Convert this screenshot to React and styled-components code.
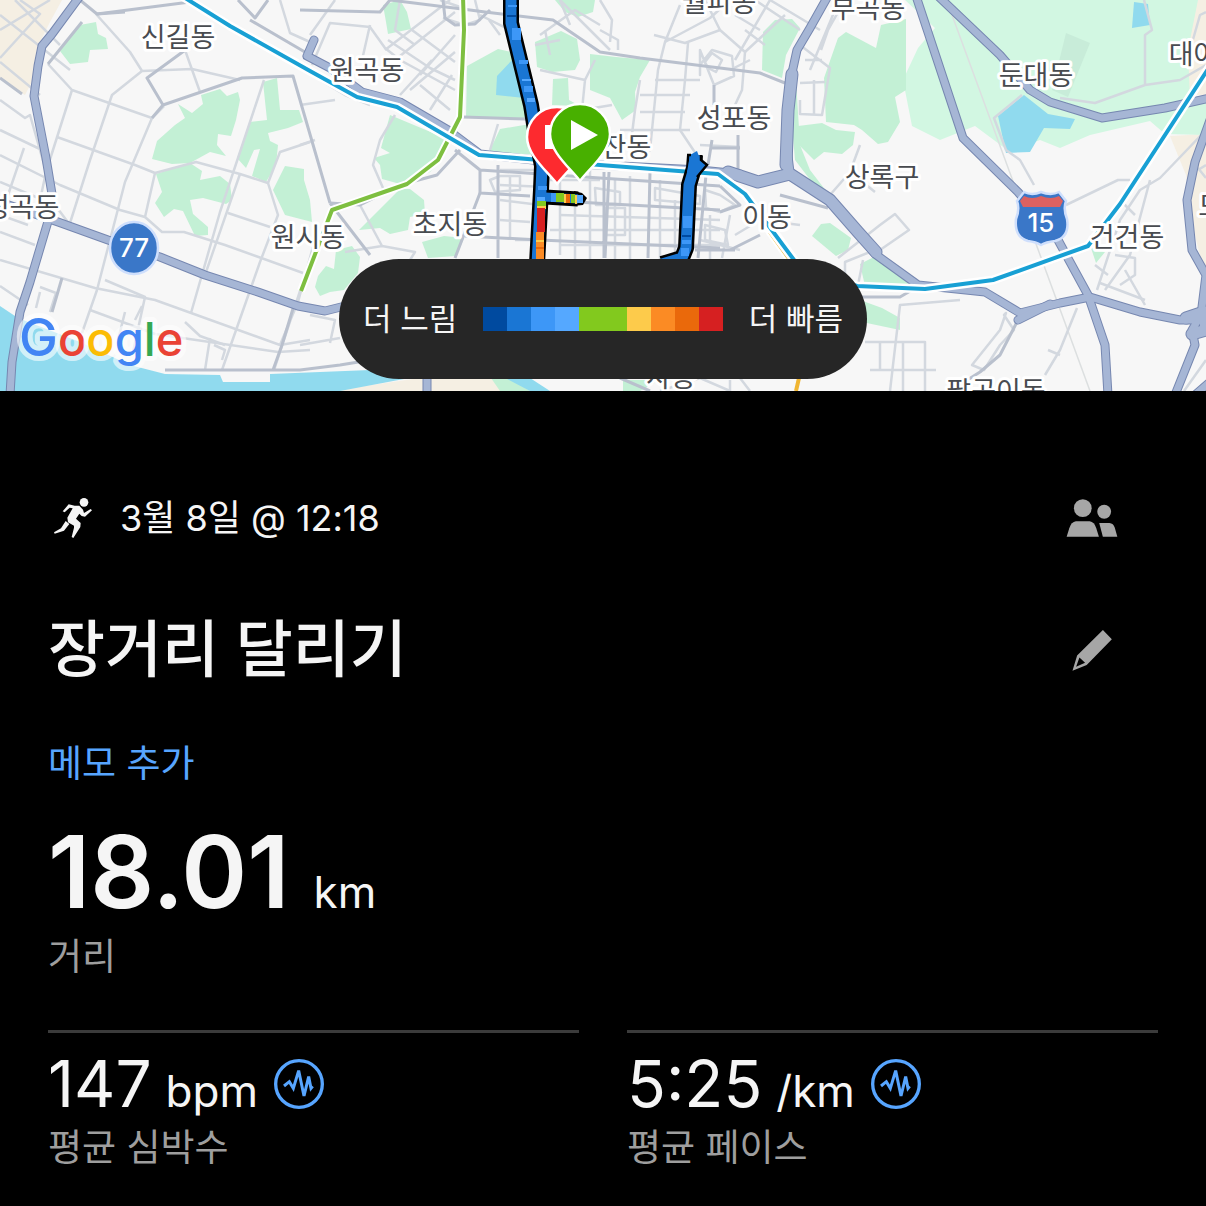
import React from "react";
import styled, { createGlobalStyle } from "styled-components";

const GlobalStyle = createGlobalStyle`
  body {
    margin: 0;
    background-color: #000;
    color: #f5f5f5;
    font-family: Inter, "Noto Sans CJK KR", sans-serif;
  }
`;

const MapSection = styled.section`
  position: relative;
  height: 391px;
  overflow: hidden;
  background-color: #f7f7f7;
`;

const MapCanvas = styled.svg`
  display: block;
  width: 100%;
  height: 100%;

  .halo {
    fill: #484b50;
    stroke: #fff;
    stroke-width: 6px;
    stroke-linejoin: round;
    paint-order: stroke;
    font: 400 27px "Noto Sans CJK KR", sans-serif;
    text-anchor: middle;
  }

  .shield {
    fill: #fff;
    font: 500 26px Inter, sans-serif;
    text-anchor: middle;
  }

  .logo {
    font: 500 47px Inter, sans-serif;
    stroke: #fff;
    stroke-opacity: 0.6;
    stroke-width: 10px;
    stroke-linejoin: round;
    paint-order: stroke;
  }

  .logo .initial {
    font-size: 52px;
  }
`;

const Legend = styled.div`
  position: absolute;
  right: 0;
  bottom: 12px;
  left: 0;
  display: flex;
  align-items: center;
  justify-content: space-between;
  width: 528px;
  height: 120px;
  margin: 0 auto;
  padding: 0 24px;
  box-sizing: border-box;
  border-radius: 60px;
  background-color: #262626;
  font-size: 31px;
  line-height: 48px;
  white-space: nowrap;
`;

const Scale = styled.div`
  display: flex;
`;

const Swatch = styled.span`
  width: 24px;
  height: 24px;
  background-color: ${(props) => props.$color};
`;

const Content = styled.main`
  padding: 61px 48px 32px;
`;

const Row = styled.div`
  display: flex;
  align-items: center;
  justify-content: space-between;
`;

const Meta = styled.div`
  display: flex;
  align-items: center;
  column-gap: 22px;
  font-size: 36px;
  line-height: 48px;

  svg {
    width: 50px;
    height: 42px;
  }
`;

const Title = styled.h1`
  margin: 0;
  font-size: 62px;
  font-weight: 500;
  line-height: 80px;
`;

const IconButton = styled.button`
  display: flex;
  align-items: center;
  justify-content: center;
  width: ${(props) => props.$size}px;
  height: ${(props) => props.$size}px;
  padding: 0;
  border: 0;
  background: none;
  color: ${(props) => props.$color || "#a6a6a6"};
  cursor: pointer;
`;

const MemoButton = styled.button`
  display: block;
  margin: 24px 0;
  padding: 0;
  border: 0;
  background: none;
  color: #57a5ff;
  font-family: inherit;
  font-size: 37px;
  line-height: 48px;
  cursor: pointer;
`;

const Value = styled.div`
  display: flex;
  align-items: baseline;
  column-gap: ${(props) => (props.$large ? 24 : 14)}px;
  font-size: ${(props) => (props.$large ? 100 : 64)}px;
  font-weight: ${(props) => (props.$large ? 600 : 400)};
  line-height: ${(props) => (props.$large ? 120 : 80)}px;
`;

const Unit = styled.span`
  font-size: 44px;
  font-weight: 400;
  line-height: 48px;
`;

const Label = styled.div`
  color: #9e9e9e;
  font-size: 37px;
  line-height: 50px;
`;

const Stats = styled.div`
  display: grid;
  grid-template-columns: 1fr 1fr;
  column-gap: 48px;
  margin-top: 48px;
`;

const Stat = styled.div`
  border-top: 3px solid #3b3b3b;
  padding-top: 12px;
`;

const StatHead = styled.div`
  display: flex;
  align-items: center;
  column-gap: 16px;
  height: 78px;
`;

const scaleColors = [
  "#004a9f", "#1a76d4", "#3d97f7", "#55a8ff", "#82c91e",
  "#82c91e", "#fdcb4b", "#fb8b24", "#ea690b", "#d62021"
];

const sand = [
  "M0 0H62L50 22L40 42L38 70L25 95L0 78Z",
  "M1198 0H1206V95H1186L1190 20Z",
  "M1170 136L1206 134V280L1195 235L1186 175Z",
  "M330 391L420 378H500L520 391Z"
];

const park = [
  "M905 0H1198L1188 50L1190 100L1206 95V135L1165 134L1150 121L1090 135L1060 148L1040 140L1010 152L975 126L940 140L912 126L903 80L918 48L935 28Z"
];

const greens = [
  "M60 51L80 25L96 22L98 34L106 38L108 49L90 50L88 62L70 64Z",
  "M152 159L157 141L175 125L185 118L178 104L192 113L203 104L201 95L220 89L227 96L238 92L240 100L236 120L231 136L218 134L217 145L226 156L210 152L190 163L172 164Z",
  "M237 158L250 122L267 120L263 82L277 78L280 110L299 110L303 122L288 128L268 133L270 141L278 145L276 165L266 182L252 176L260 149L254 150L246 168Z",
  "M156 174L190 163L202 171L200 180L220 176L230 184L232 200L226 204L203 198L190 200L193 214L208 227L208 235L195 236L183 211L174 209L164 217L155 203L162 192Z",
  "M273 190L285 166L304 169V180L310 200L312 222L285 215Z",
  "M383 5L400 0L407 12L411 29L388 34L386 22Z",
  "M390 115L445 138L442 158L430 172L400 184L382 179L380 165L374 158L390 153L381 148Z",
  "M359 230L400 189L410 189L424 200L425 214L410 217L408 230L390 234L380 228Z",
  "M318 276L326 266L334 269L336 250L352 246L360 257L358 273L344 290L330 292L320 296L315 287Z",
  "M422 242L444 236L464 238L456 256L428 258Z",
  "M467 66L498 49L525 55L535 117L520 119L466 117Z",
  "M490 150L500 129L530 124L535 155L490 152Z",
  "M535 42L561 31L577 39L580 60L575 70L552 72L537 67Z",
  "M553 79L568 78L569 100L580 106L552 105Z",
  "M590 54L616 57L650 60L640 77L635 92L636 110L622 120L610 98L590 90Z",
  "M555 0H595L593 12L578 17L565 12Z",
  "M763 32L775 20L792 19L800 28L786 55L782 78L762 70Z",
  "M824 78L838 38L846 32L876 48L881 25L906 19V90L895 97L900 122L888 142L878 144L862 130L854 125L826 122Z",
  "M798 126L822 123L836 130L855 132L853 145L842 154L824 152L814 160L798 144Z",
  "M788 80L796 80L800 145L810 170L830 196L818 190L795 160Z",
  "M812 236L821 224L830 223L851 238L848 250L836 256Z",
  "M860 264L874 257L905 277L910 286H865Z",
  "M860 300L882 308L900 318V330L862 322Z",
  "M623 380H660L640 391H623Z",
  "M491 378H510L530 391H500Z",
  "M1091 248L1105 252L1096 263Z"
];

const waters = [
  "M0 306L18 318L80 342L130 365L165 374L220 375L223 382H270V374L345 371L420 368V376L340 391H0Z",
  "M497 76L514 58L524 98L496 95Z",
  "M998 116L1024 95L1048 114L1075 119L1070 129L1044 128L1030 152L1006 153Z",
  "M1134 2L1148 4L1150 25L1132 28Z",
  "M505 378H530L550 391H530Z"
];

const minorRoads = [
  "M0 58L40 14L20 0M0 15L70 70M0 30L50 0M15 0L60 45M0 62L40 95",
  "M48 64L72 90L152 118L164 106M72 90L46 172L38 210M57 137L135 165L155 173",
  "M96 14L130 52L142 71L192 69L240 80M142 71L112 95L90 160L70 223",
  "M185 50L200 92M152 118L125 182L97 290M97 290L82 333M155 173L145 217L162 232H184L225 245L303 273",
  "M0 100L25 118L30 115L47 175M0 130L42 150M0 155L60 185L120 210L145 217M24 148L8 195",
  "M0 182L55 205L70 225M0 215L28 225M0 232L35 245M0 260L95 288L155 300L280 345L310 340",
  "M0 286L28 305M40 287L56 293L50 312M40 292L36 308M90 310L155 334L278 352L310 350",
  "M105 280L145 297L133 352M125 312L118 340M142 306L135 320M185 322L200 336L225 345",
  "M264 80L220 212L191 313M155 173L196 162L240 174L268 183L280 152L310 142M240 174L205 275M228 213L270 227",
  "M268 183L278 215L260 262L222 370M314 243L298 302L280 345M274 370L302 285",
  "M210 338L205 370M214 345L225 350L222 360",
  "M280 0L290 33L310 42M310 35L335 0M312 65L330 23L370 27L385 48L400 60L455 90",
  "M320 80L345 95L370 105M335 100L300 105M300 145L315 140",
  "M370 25L362 60M400 0L395 30L415 45M385 50L450 0M412 30L455 62M395 60L455 12M420 75L455 35M410 90L455 52",
  "M388 40L430 68L455 80M400 95L432 60M430 110L452 75M420 85L450 110",
  "M463 8L440 0M443 18L465 25L480 20L475 0M480 15L520 35",
  "M395 115L380 140L373 165L383 188M360 205L382 246L415 252L410 260M382 246L345 252",
  "M489 20L500 35M540 35L575 10L600 25M545 30L550 55M560 0L570 25",
  "M490 150L498 124M535 45L560 40M560 0L585 25L610 50M600 0L612 20L610 42",
  "M585 80L582 110L612 105M540 70L585 80L595 60M600 30L618 40V50",
  "M654 35L685 43L720 30L745 52L742 90L735 105M680 5L665 42L658 70L650 150L642 160",
  "M665 42L710 18L730 0M688 43L685 80L680 130L700 160M640 80L635 110L630 150",
  "M700 50L714 85L734 76L732 56L712 50L700 65V75ZM705 62L712 53L722 60L716 72L708 68Z",
  "M640 95H690M640 112H685M655 80H700M620 130H690M700 145L740 147",
  "M735 60L770 0M720 30L705 0M745 52L785 15M755 0L800 30M770 0L820 30M745 30L765 45M730 70L750 60M735 15L760 30",
  "M800 45L830 68L822 115L800 114V100M800 83L825 82M805 60H822M814 80V115",
  "M821 50L828 30L845 0M810 70L835 10",
  "M500 170H545M500 185L545 187M510 175V240M500 220L530 222M515 240H535M500 200L540 205",
  "M490 180L500 176H520V190L495 192Z",
  "M550 180H600M560 170V255M575 205V260M590 170V260M615 180V260M630 176V260M660 180V260M675 200V260",
  "M560 215L720 220M550 230H720M560 245H720M595 188L620 192V205H596Z",
  "M605 208H625V235H606Z M655 188L700 196V204L655 200Z",
  "M705 190L720 195L735 205L720 212L706 208ZM705 225L725 230L728 245L705 240Z",
  "M700 240L740 250M710 215V260M730 215L722 258M735 235L760 220L800 225",
  "M838 258L880 225L895 214L909 230L880 250L872 256",
  "M830 195L850 172L860 145M850 172L875 192M857 290L863 260M870 252L845 262V280",
  "M960 300L900 305L890 391M865 342H925V391M870 370H936M880 342V370M903 342V391",
  "M1006 313L1000 330L980 355L972 365L984 370L1000 345L1014 330L1004 315Z",
  "M1077 308L1060 350L1045 375M1048 350L1060 355",
  "M1006 150L1020 160L1034 185M1006 150L994 118L1022 95M1066 205L1118 180H1130",
  "M1206 130L1160 178L1140 190L1120 220L1097 290M1150 180L1130 255L1105 290",
  "M1120 200L1135 215M1115 225L1140 235M1125 270L1145 305M1115 255L1135 258V275L1120 285",
  "M1095 265L1108 275M1100 283L1145 300M1184 391L1206 360",
  "M1144 0L1152 30L1145 35V85L1180 80L1206 65M1145 85L1095 103L1060 98M1190 50L1200 15L1206 12",
  "M1206 165L1198 170M1198 168L1206 178",
  "M310 315L335 320L330 343M300 345L340 338",
  "M660 391L700 378L730 391M690 378L680 391M730 391V380M740 378L750 391"
];

const middleRoads = [
  "M0 78L22 94M80 0L97 14L190 2M238 0L255 18L268 0M48 64L82 22",
  "M188 48L147 78L163 105L242 78L293 76L330 203M163 105L152 118",
  "M97 14L125 12M300 10L380 12L390 0L470 10L485 12L553 20L600 52L640 58L760 73L785 83",
  "M250 20L310 55M330 203L360 205L380 195M330 203L370 255M460 150L437 175L400 185",
  "M443 0L445 18L455 25L475 24L490 10M463 117L525 119L580 122",
  "M455 150L480 170V193L530 196M480 170L540 174L600 178L720 186",
  "M480 193L465 232L455 258M498 165V258M540 200L720 210M465 236L540 240L720 248M604 172V258M609 172L605 258",
  "M650 172L648 258M706 175L698 258M712 140L708 165M738 135V170M712 148H740",
  "M62 278L52 312M295 302L282 345L273 370M165 370H300L340 365L420 352",
  "M720 186L740 205L720 212M730 250L760 235M695 250H735",
  "M714 85V105M780 195L828 208M857 297H900L912 290",
  "M1018 320L1000 355L980 372L950 391M650 391L620 378"
];

const highways = [
  "M80 -4L52 34L42 46L38 66L34 96L46 158L52 194L49 218L30 282L20 312L12 362L10 395",
  "M0 202L58 222L108 240L160 257L205 275L258 292L298 306L325 311L345 306",
  "M314 40L307 56L330 68L362 92L400 102L448 130L480 154L560 163L700 170L740 174",
  "M828 -4L810 28L797 50L790 82L786 140L790 172",
  "M858 232L875 254L918 285L985 292L1020 313L1060 303L1090 297L1140 312L1180 320L1210 320",
  "M916 -4L963 138L1018 192L1058 240L1088 295L1105 345L1108 395",
  "M938 -4L1000 55L1030 90L1050 102L1102 118L1165 108L1210 98",
  "M1210 120L1195 162L1187 200L1192 250L1206 275L1201 315L1192 330L1195 345L1175 395",
  "M1018 320L1050 304M427 378V395M1195 395L1210 382"
];

// interchanges, where several carriageways run side by side
const wideHighways = [
  "M792 74L788 110L786 165",
  "M728 172L758 182L790 174L830 200L858 232L876 252",
  "M1186 318L1204 312L1206 330L1192 334"
];

const lines = {
  green: "M463 -4L464 30L460 117L438 160L407 184L332 210L301 291",
  blue: "M182 -4L230 26L310 71L357 97L397 107L479 155L540 160L600 165L718 174L745 194L800 268L857 286L925 289L993 280L1088 246L1120 204L1210 66"
};

const routes = {
  main: "M511 -4V23L531 105L535 130L542 166L541 190L537 264",
  branch: "M545 197L578 199",
  right: "M695 155L694 168L689 185L686 248L682 258L662 264"
};

const routeTicks = [
  [508, 5, 9, 2, "#3d97f7"], [507, 15, 9, 2, "#004a9f"], [512, 28, 9, 12, "#3d97f7"],
  [519, 60, 9, 4, "#3d97f7"], [522, 79, 9, 2, "#55a8ff"], [524, 86, 9, 6, "#3d97f7"],
  [527, 98, 8, 4, "#55a8ff"], [538, 186, 9, 4, "#3d97f7"], [537, 197, 8, 4, "#55a8ff"],
  [537, 201, 9, 5, "#82c91e"], [537, 206, 9, 3, "#fdcb4b"], [537, 208, 8, 24, "#d62021"],
  [536, 232, 8, 28, "#fb8b24"], [536, 240, 8, 2, "#fdcb4b"], [536, 247, 8, 2, "#ea690b"],
  [551, 193, 5, 9, "#3d97f7"], [556, 193, 8, 9, "#82c91e"], [564, 194, 2, 9, "#fdcb4b"],
  [566, 194, 4, 9, "#ea690b"], [571, 194, 4, 9, "#82c91e"], [575, 195, 2, 9, "#fdcb4b"],
  [577, 195, 6, 8, "#55a8ff"], [683, 216, 9, 12, "#3d97f7"], [682, 235, 9, 2, "#004a9f"],
  [682, 240, 9, 4, "#3d97f7"], [681, 248, 8, 8, "#3d97f7"]
];

const places = [
  ["신길동", 178, 47], ["원곡동", 367, 80], ["월피동", 719, 12], ["부곡동", 868, 18],
  ["둔대동", 1036, 85], ["대야동", 1206, 64], ["성포동", 734, 128], ["고잔동", 614, 157],
  ["상록구", 882, 187], ["이동", 767, 227], ["건건동", 1127, 247], ["도마교동", 1248, 216],
  ["초지동", 450, 234], ["원시동", 308, 247], ["성곡동", 22, 217], ["사동", 671, 387],
  ["팔곡이동", 996, 401]
];

const Paths = ({ items, ...rest }) => (
  <g {...rest}>
    {items.map((d) => (
      <path key={d} d={d} />
    ))}
  </g>
);

const Pin = ({ x, y, color, children }) => (
  <g transform={`translate(${x} ${y})`}>
    <path
      d="M0 0C-10 -13 -30 -29 -30 -47A30 30 0 0 1 30 -47C30 -29 10 -13 0 0Z"
      fill={color}
      stroke="#fff"
      strokeWidth="2.5"
    />
    {children}
  </g>
);

const RouteMap = () => (
  <MapCanvas viewBox="0 0 1206 391" preserveAspectRatio="xMidYMid slice" role="img" aria-label="경로 지도">
    <rect width="1206" height="391" fill="#f7f7f7" />
    <Paths items={sand} fill="#f5efe3" />
    <Paths items={park} fill="#d2f7e2" />
    <path d="M1066 33L1090 43L1068 97L1052 90Z" fill="#c8ecd9" />
    <Paths items={greens} fill="#c3f0d5" />
    <Paths items={waters} fill="#90daee" />
    <path d="M952 15L1090 391" fill="none" stroke="#dcdfe0" strokeWidth="1.5" />
    <g fill="none" strokeLinejoin="round">
      <Paths items={minorRoads} stroke="#d3d8df" strokeWidth="2.5" />
      <Paths items={middleRoads} stroke="#b9c0cd" strokeWidth="3" />
      <g strokeLinecap="round">
        <Paths items={highways} stroke="#7687b0" strokeWidth="9" />
        <Paths items={wideHighways} stroke="#7687b0" strokeWidth="13" />
        <Paths items={highways} stroke="#a6b6d5" strokeWidth="7" />
        <Paths items={wideHighways} stroke="#a6b6d5" strokeWidth="11" />
      </g>
      <path d="M768 226L795 264" stroke="#fff" strokeWidth="12" />
      <path d="M770 232L793 264M799 378L796 391" stroke="#f0b531" strokeWidth="4" />
      <path d={lines.green} stroke="#fff" strokeWidth="8" />
      <path d={lines.green} stroke="#7ebf40" strokeWidth="4" />
      <path d={lines.blue} stroke="#fff" strokeWidth="9" />
      <path d={lines.blue} stroke="#18a0d4" strokeWidth="4" />
    </g>
    {places.map(([name, x, y]) => (
      <text key={name} className="halo" x={x} y={y}>{name}</text>
    ))}
    <g fill="none" strokeLinejoin="round">
      <path d={routes.main} stroke="#000" strokeWidth="16" />
      <path d={routes.branch} stroke="#000" strokeWidth="15" />
      <path d="M574 191L582 193L587 198L583 205L572 206Z" fill="#000" />
      <path d={routes.right} stroke="#000" strokeWidth="16" />
      <path d={routes.main} stroke="#1a76d4" strokeWidth="11" />
      <path d={routes.branch} stroke="#1a76d4" strokeWidth="9" />
      <path d={routes.right} stroke="#1a76d4" strokeWidth="11" />
    </g>
    <path d="M690 155L697 151L700 159L707 165L697 176L687 172Z" fill="#1a76d4" />
    <path d="M687 155H691M701 155V160L707 165L697 177" fill="none" stroke="#000" strokeWidth="2.5" />
    {routeTicks.map(([x, y, width, height, fill]) => (
      <rect key={`${x}-${y}`} x={x} y={y} width={width} height={height} fill={fill} />
    ))}
    <Pin x={557} y={184} color="#fd2a2f">
      <path d="M-12 -59H12V-35H-12Z" fill="#fff" />
    </Pin>
    <Pin x={580} y={181} color="#48b000">
      <path d="M-9 -61L18 -46L-9 -31Z" fill="#fff" />
    </Pin>
    <ellipse cx="134" cy="248" rx="24" ry="26" fill="#3a77c8" stroke="#cfdffc" strokeWidth="2.5" />
    <text className="shield" x="134" y="257">77</text>
    <path
      d="M1024 192Q1032 196 1041 192Q1051 196 1059 192L1066 201Q1063 209 1067 219Q1070 237 1055 241Q1046 242 1041 245Q1036 242 1028 241Q1014 237 1016 219Q1020 209 1017 201Z"
      fill="#3a77c8"
      stroke="#cfdffc"
      strokeWidth="2.5"
    />
    <path d="M1024 196Q1032 200 1041 196Q1051 200 1059 196L1063 201L1060 207H1023L1020 201Z" fill="#dc6161" />
    <text className="shield" x="1041" y="232">15</text>
    <text className="logo" x="19" y="356">
      <tspan className="initial" fill="#4285f4">G</tspan>
      <tspan fill="#ea4335">o</tspan>
      <tspan fill="#fbbc05">o</tspan>
      <tspan fill="#4285f4">g</tspan>
      <tspan fill="#34a853">l</tspan>
      <tspan fill="#ea4335">e</tspan>
    </text>
  </MapCanvas>
);

const RunIcon = () => (
  <svg viewBox="54 78 150 126" fill="#f5f5f5" aria-hidden="true">
    <circle cx="162" cy="94" r="13" />
    <path d="M116 100L134 104L148 104L159 116L162 126L182 114L186 118L165 137L155 135L148 128L138 143L152 156L151 168L130 201L125 198L132 170V164L114 154L112 140L128 112L119 110L104 124L98 121Z" />
    <path d="M107 150L118 159L102 179L74 188L72 184L93 172Z" />
  </svg>
);

const PeopleIcon = () => (
  <svg width="52" height="40" viewBox="78 54 158 120" fill="currentColor" aria-hidden="true">
    <circle cx="129" cy="84" r="27" />
    <circle cx="194" cy="95" r="21" />
    <path d="M80 171L88 145Q94 126 108 124H150Q164 126 170 145L178 171Z" />
    <path d="M179 129H210Q222 130 226 143L234 171H190Z" />
  </svg>
);

const PencilIcon = () => (
  <svg width="42" height="43" viewBox="92 444 126 130" fill="currentColor" aria-hidden="true">
    <path fillRule="evenodd" d="M188 447L215 475L139 553L96 570L110 524ZM117 530L107 558L134 546Z" />
  </svg>
);

const PulseIcon = () => (
  <svg width="50" height="50" viewBox="738 59 150 150" fill="none" stroke="currentColor" aria-hidden="true">
    <circle cx="813" cy="134" r="70" strokeWidth="10" />
    <path d="M768 140L784 127L796 147L812 94L828 170L842 112L849 147L854 141" strokeWidth="9" />
  </svg>
);

const stats = [
  { value: "147", unit: "bpm", label: "평균 심박수" },
  { value: "5:25", unit: "/km", label: "평균 페이스" }
];

const App = () => {
  return (
    <>
      <GlobalStyle />
      <MapSection>
        <RouteMap />
        <Legend>
          <span>더 느림</span>
          <Scale>
            {scaleColors.map((color, index) => (
              <Swatch key={index} $color={color} />
            ))}
          </Scale>
          <span>더 빠름</span>
        </Legend>
      </MapSection>
      <Content>
        <Row>
          <Meta>
            <RunIcon />
            <span>3월 8일 @ 12:18</span>
          </Meta>
          <IconButton $size={132} aria-label="공개 범위">
            <PeopleIcon />
          </IconButton>
        </Row>
        <Row>
          <Title>장거리 달리기</Title>
          <IconButton $size={132} aria-label="제목 편집">
            <PencilIcon />
          </IconButton>
        </Row>
        <MemoButton>메모 추가</MemoButton>
        <Value $large>
          18.01
          <Unit>km</Unit>
        </Value>
        <Label>거리</Label>
        <Stats>
          {stats.map((stat) => (
            <Stat key={stat.label}>
              <StatHead>
                <Value>
                  {stat.value}
                  <Unit>{stat.unit}</Unit>
                </Value>
                <IconButton $size={50} $color="#57a5ff" aria-label={`${stat.label} 그래프`}>
                  <PulseIcon />
                </IconButton>
              </StatHead>
              <Label>{stat.label}</Label>
            </Stat>
          ))}
        </Stats>
      </Content>
    </>
  );
};

export default App;
